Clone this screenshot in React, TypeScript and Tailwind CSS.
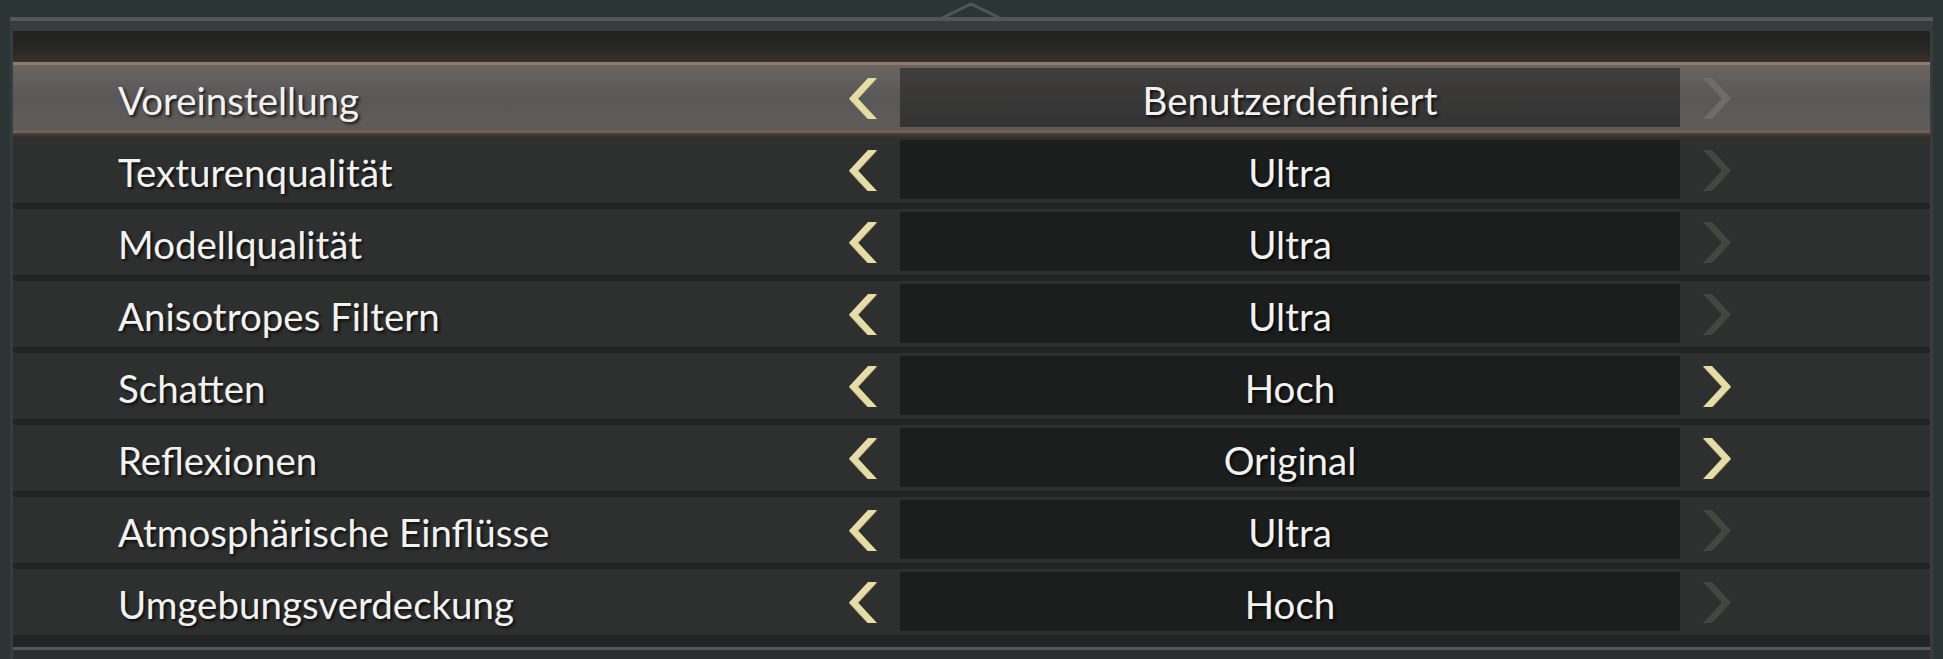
import React from 'react';

type Row = { label: string; value: string; canNext: boolean };

const ROWS: Row[] = [
  { label: 'Voreinstellung', value: 'Benutzerdefiniert', canNext: false },
  { label: 'Texturenqualität', value: 'Ultra', canNext: false },
  { label: 'Modellqualität', value: 'Ultra', canNext: false },
  { label: 'Anisotropes Filtern', value: 'Ultra', canNext: false },
  { label: 'Schatten', value: 'Hoch', canNext: true },
  { label: 'Reflexionen', value: 'Original', canNext: true },
  { label: 'Atmosphärische Einflüsse', value: 'Ultra', canNext: false },
  { label: 'Umgebungsverdeckung', value: 'Hoch', canNext: false },
];

const Chevron = ({ dir, tone }: { dir: 'left' | 'right'; tone: 'on' | 'off' | 'offLit' }) => {
  const fill = tone === 'on' ? '#e6dca6' : tone === 'offLit' ? '#6d6c66' : '#45463f';
  const points = dir === 'left' ? '19,0 28,0 9,20.5 28,41 19,41 0,20.5' : '0,0 9,0 28,20.5 9,41 0,41 19,20.5';
  return (
    <svg width="28" height="41" viewBox="0 0 28 41" className="shrink-0">
      {tone === 'on' && <polygon points={points} fill="#8a8160" transform="translate(0 1)" />}
      <polygon points={points} fill={fill} />
    </svg>
  );
};

const SettingRow = ({ row, selected }: { row: Row; selected: boolean }) => (
  <div
    className={`flex items-center h-[66px] ${
      selected ? 'bg-gradient-to-b from-[#6a6461] via-[#585858] to-[#615c59]' : 'bg-[#2e302f]'
    }`}
  >
    <div className="w-[836px] shrink-0 pl-[105px] pt-[5px] text-[38.5px] leading-none text-[#f2f2f0] [text-shadow:2px_2px_3px_rgba(0,0,0,0.75)]">
      {row.label}
    </div>
    <Chevron dir="left" tone="on" />
    <div
      className={`ml-[23px] w-[780px] h-[59px] mt-[-1px] pt-[5px] flex items-center justify-center text-[38.5px] leading-none text-[#f2f2f0] [text-shadow:2px_2px_3px_rgba(0,0,0,0.75)] ${
        selected ? 'bg-gradient-to-b from-[#3f3e3d] to-[#333333]' : 'bg-[#1c1d1d]'
      }`}
    >
      {row.value}
    </div>
    <div className="ml-[23px]">
      <Chevron dir="right" tone={row.canNext ? 'on' : selected ? 'offLit' : 'off'} />
    </div>
  </div>
);

export default function App() {
  return (
    <div
      className="relative w-[1943px] h-[659px] overflow-hidden bg-[#2c3535] pt-[17px] pl-[10px]"
      style={{ fontFamily: 'Lato, "Open Sans", sans-serif' }}
    >
      <svg className="absolute left-[938px] top-0" width="66" height="22" viewBox="0 0 66 22">
        <path d="M2 19 L33 4 L64 19" fill="none" stroke="#505656" strokeWidth="3" />
      </svg>
      <div className="w-[1923px] border-t-4 border-[#525757]">
        <div className="bg-[#383c3c] px-[3px] pt-[10px]">
          {/* header band */}
          <div className="h-[31px] bg-gradient-to-b from-[#222423] via-[#262625] to-[#3a302b]" />
          <div className="h-[3px] bg-[#8f7b6f]" />
          <div className="flex flex-col">
            {ROWS.map((row, i) => (
              <React.Fragment key={row.label}>
                <SettingRow row={row} selected={i === 0} />
                {i === 0 ? (
                  <div className="h-[6px] bg-gradient-to-b from-[#8a766a] via-[#4a3b34] to-[#35302d]" />
                ) : i < ROWS.length - 1 ? (
                  <div className="h-[6px] bg-[#222423]" />
                ) : null}
              </React.Fragment>
            ))}
          </div>
          <div className="h-[12px] bg-[#232524]" />
          <div className="h-[3px] bg-[#555858]" />
          <div className="h-[10px] bg-[#2b2f2f]" />
        </div>
      </div>
    </div>
  );
}
